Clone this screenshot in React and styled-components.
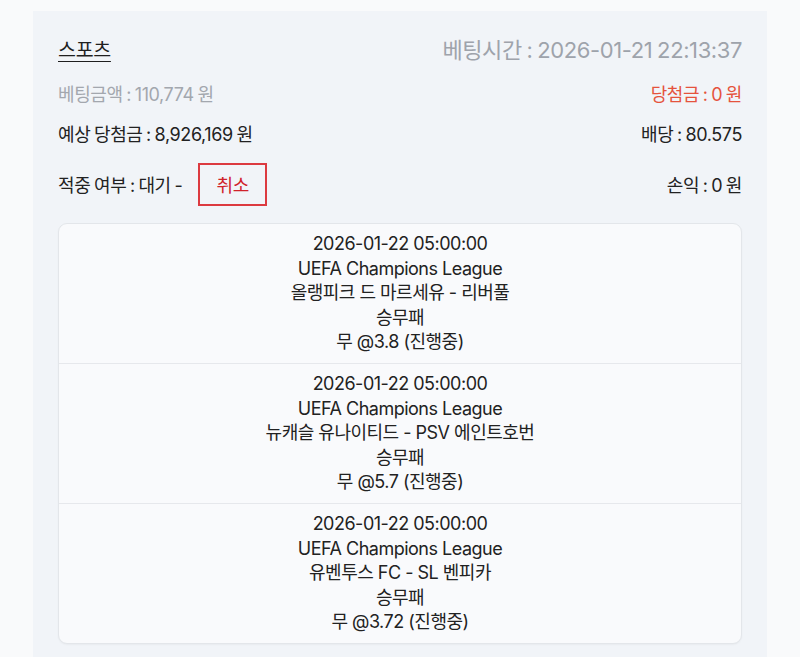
import React from "react";
import styled, { createGlobalStyle } from "styled-components";

const Global = createGlobalStyle`
  html, body { margin: 0; padding: 0; background: #f9fafb; }
  body { font-family: Inter, "Noto Sans CJK KR", sans-serif; color: #222; }
`;

const Page = styled.div`
  padding: 11px 33px 0 33px;
`;

const Card = styled.div`
  background: #f1f4f8;
  padding: 23px 25px 14px 25px;
`;

const Row = styled.div`
  display: flex;
  justify-content: space-between;
  align-items: center;
  height: ${(p) => p.$h || 40}px;
  margin-top: ${(p) => p.$mt || 0}px;
`;

const Title = styled.span`
  font-size: 19.5px;
  letter-spacing: -0.3px;
  color: #1f1f1f;
  text-decoration: underline;
  text-underline-offset: 4px;
  text-decoration-thickness: 1px;
`;

const Text = styled.span`
  font-size: ${(p) => p.$size || 18}px;
  letter-spacing: -0.4px;
  word-spacing: -1px;
  color: ${(p) => p.$color || "#222"};
`;

const Left = styled.div`
  display: flex;
  align-items: center;
  gap: 16px;
`;

const CancelButton = styled.button`
  appearance: none;
  box-sizing: border-box;
  font-family: inherit;
  font-size: 18px;
  letter-spacing: -0.4px;
  color: #d0222a;
  background: transparent;
  border: 2px solid #dc3a40;
  border-radius: 0;
  width: 69px;
  height: 43px;
  padding: 0;
`;

const List = styled.div`
  margin-top: 12px;
  background: #f9fafc;
  border: 1px solid #e3e6ea;
  border-radius: 9px;
  box-shadow: 0 1px 2px rgba(0, 0, 0, 0.04);
  overflow: hidden;
`;

const Item = styled.div`
  display: flex;
  flex-direction: column;
  align-items: center;
  padding: 8px 0 8px;
  border-top: ${(p) => (p.$first ? "none" : "1px solid #e6e8ec")};
`;

const Line = styled.div`
  font-size: 18px;
  line-height: 24.6px;
  letter-spacing: -0.5px;
  color: #222;
`;

const games = [
  { time: "2026-01-22 05:00:00", league: "UEFA Champions League", match: "올랭피크 드 마르세유 - 리버풀", type: "승무패", pick: "무 @3.8 (진행중)" },
  { time: "2026-01-22 05:00:00", league: "UEFA Champions League", match: "뉴캐슬 유나이티드 - PSV 에인트호번", type: "승무패", pick: "무 @5.7 (진행중)" },
  { time: "2026-01-22 05:00:00", league: "UEFA Champions League", match: "유벤투스 FC - SL 벤피카", type: "승무패", pick: "무 @3.72 (진행중)" },
];

export default function App() {
  return (
    <Page>
      <Global />
      <Card>
        <Row $h={28}>
          <Title>스포츠</Title>
          <Text $size={22} $color="#9ea3ab">베팅시간 : 2026-01-21 22:13:37</Text>
        </Row>
        <Row $h={46} $mt={8}>
          <Text $color="#a3a7ae">베팅금액 : 110,774 원</Text>
          <Text $color="#e5533d">당첨금 : 0 원</Text>
        </Row>
        <Row $h={34}>
          <Text>예상 당첨금 : 8,926,169 원</Text>
          <Text>배당 : 80.575</Text>
        </Row>
        <Row $h={54} $mt={7}>
          <Left>
            <Text>적중 여부 : 대기 -</Text>
            <CancelButton>취소</CancelButton>
          </Left>
          <Text>손익 : 0 원</Text>
        </Row>
        <List>
          {games.map((g, i) => (
            <Item key={i} $first={i === 0}>
              <Line>{g.time}</Line>
              <Line>{g.league}</Line>
              <Line>{g.match}</Line>
              <Line>{g.type}</Line>
              <Line>{g.pick}</Line>
            </Item>
          ))}
        </List>
      </Card>
    </Page>
  );
}
